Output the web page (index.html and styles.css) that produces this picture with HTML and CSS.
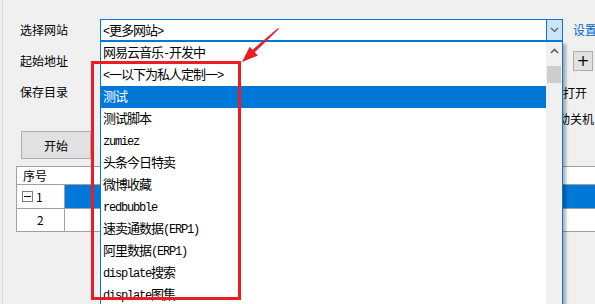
FILE: index.html
```html
<!DOCTYPE html>
<html lang="zh-CN">
<head>
<meta charset="utf-8">
<title>选择网站</title>
<link rel="stylesheet" href="styles.css">
</head>
<body>
<div class="win">
  <div class="frame">
    <div class="form">
      <span class="lbl">选择网站</span>
      <div class="combo">
        <span class="combo-text"><span class="a">&lt;</span>更多网站<span class="a">&gt;</span></span>
        <span class="combo-btn"><svg width="9" height="6" viewBox="0 0 9 6"><polyline points="1,1 4.5,4.5 8,1" fill="none" stroke="#5a5a5a" stroke-width="1.2"/></svg></span>
      </div>
      <span class="link">设置</span>

      <span class="lbl">起始地址</span>
      <div class="field"></div>
      <button class="btn plus">+</button>

      <span class="lbl">保存目录</span>
      <div class="field"></div>
      <button class="flat">打开</button>

      <label class="chk"><span class="box"></span>自动关机</label>
    </div>

    <button class="btn start">开始</button>

    <div class="tbl">
      <div class="th">序号</div>
      <div class="c c1"><span class="tog"></span>1</div>
      <div class="c sel"></div>
      <div class="c c2">2</div>
      <div class="c"></div>
    </div>
  </div>

  <div class="dropdown">
    <div class="items">
      <div class="item">网易云音乐<span class="a">-</span>开发中</div>
      <div class="item"><span class="a">&lt;</span>一以下为私人定制一<span class="a">&gt;</span></div>
      <div class="item sel">测试</div>
      <div class="item">测试脚本</div>
      <div class="item"><span class="a">zumiez</span></div>
      <div class="item">头条今日特卖</div>
      <div class="item">微博收藏</div>
      <div class="item"><span class="a">redbubble</span></div>
      <div class="item">速卖通数据<span class="a">(ERP1)</span></div>
      <div class="item">阿里数据<span class="a">(ERP1)</span></div>
      <div class="item"><span class="a">displate</span>搜索</div>
      <div class="item"><span class="a">displate</span>图集</div>
    </div>
    <div class="sb">
      <div class="sb-up"><svg width="9" height="6" viewBox="0 0 9 6"><polyline points="1,5 4.5,1.5 8,5" fill="none" stroke="#606060" stroke-width="1.6"/></svg></div>
      <div class="sb-thumb"></div>
    </div>
  </div>

  <div class="mark"></div>
  <svg class="arrow" width="595" height="304" viewBox="0 0 595 304">
    <polygon points="278.9,28.9 253.7,53.3 251.3,50.7 278.1,28.1" fill="#ed1c24"/>
    <polygon points="242,62 257.9,55.6 249.7,46.8" fill="#ed1c24"/>
  </svg>
</div>
</body>
</html>
```

FILE: styles.css
```css
* { box-sizing: border-box; }
html, body { margin: 0; padding: 0; }
body {
  background: #f0f0f0;
  font-family: "Noto Sans CJK SC", sans-serif;
  font-size: 12px;
  color: #000;
  overflow: hidden;
}
.win { position: relative; width: 595px; height: 304px; overflow: hidden; }
.frame {
  margin-left: 2px;
  border-left: 1px solid #dadada;
  padding-left: 17px;
  padding-top: 19px;
  height: 304px;
}
.form {
  display: grid;
  grid-template-columns: 80px 463px 1fr;
  grid-template-rows: 22px 20px 22px 14px;
  row-gap: 10px;
}
.lbl { align-self: center; line-height: 16px; white-space: nowrap; }
.combo {
  display: flex;
  height: 22px;
  border: 1px solid #0078d7;
  background: #fff;
}
.combo-text { flex: 1; padding-left: 2px; line-height: 20px; white-space: nowrap; font-size: 13px; letter-spacing: -1px; }
.combo-btn {
  width: 16px;
  border-left: 1px solid #0078d7;
  background: #cce4f7;
  display: flex;
  align-items: center;
  justify-content: center;
}
.link { color: #0066cc; margin-left: 10px; align-self: center; white-space: nowrap; line-height: 16px; }
.field { background: #fff; border: 1px solid #7a7a7a; }
.btn {
  background: #e1e1e1;
  border: 1px solid #adadad;
  font: inherit;
  color: #000;
  padding: 0;
}
.plus { width: 20px; height: 20px; margin-left: 10px; font-size: 15px; line-height: 16px; font-family: "DejaVu Sans", sans-serif; }
.flat {
  background: none;
  border: 0;
  padding: 0;
  font: inherit;
  color: #000;
  justify-self: start;
  align-self: center;
  white-space: nowrap;
}
.chk {
  grid-column: 2 / 4;
  justify-self: end;
  margin-right: 3px;
  margin-top: -3px;
  display: flex;
  align-items: center;
  gap: 3px;
  line-height: 14px;
  white-space: nowrap;
}
.box { width: 13px; height: 13px; border: 1px solid #333; background: #fff; }
.start {
  display: block;
  margin-top: 4px;
  margin-left: 1px;
  width: 70px;
  height: 28px;
}
.tbl {
  margin-top: 7px;
  margin-left: -4px;
  width: 600px;
  display: grid;
  grid-template-columns: 47px 1fr;
  grid-template-rows: 17px 23px 22px;
  gap: 1px;
  background: #a0a0a0;
  border: 1px solid #a0a0a0;
}
.th { grid-column: 1 / -1; background: #fff; padding-left: 6px; line-height: 17px; }
.c { background: #fff; }
.c.sel { background: #0078d7; }
.c1 { display: flex; align-items: center; padding-left: 5px; }
.c2 { padding-left: 20px; line-height: 22px; }
.tog {
  position: relative;
  width: 11px;
  height: 11px;
  border: 1px solid #7a7a7a;
  margin-right: 3px;
  background: #fff;
}
.tog::after {
  content: "";
  position: absolute;
  left: 1px;
  right: 1px;
  top: 4px;
  height: 1px;
  background: #000;
}
.dropdown {
  position: absolute;
  left: 100px;
  top: 41px;
  width: 463px;
  height: 290px;
  border: 1px solid #0078d7;
  background: #fff;
  display: flex;
  box-shadow: 3px 3px 3px rgba(0, 0, 0, 0.3);
}
.items { flex: 1; }
.item {
  height: 22px;
  line-height: 19px;
  padding: 0 0 3px 2px;
  white-space: nowrap;
  font-size: 13px;
  letter-spacing: -1px;
}
.item.sel { background: #0078d7; color: #fff; }
.a {
  font-family: "Liberation Mono", monospace;
  font-size: 12px;
  letter-spacing: -1.2px;
}
.sb { width: 16px; background: #f0f0f0; }
.sb-up { height: 17px; display: flex; align-items: center; justify-content: center; }
.sb-thumb { margin: 7px 1px 0; height: 17px; background: #cdcdcd; }
.mark {
  position: absolute;
  left: 91px;
  top: 61px;
  width: 150px;
  height: 239px;
  border: 3px solid #ed1c24;
}
.arrow { position: absolute; left: 0; top: 0; pointer-events: none; }
```
